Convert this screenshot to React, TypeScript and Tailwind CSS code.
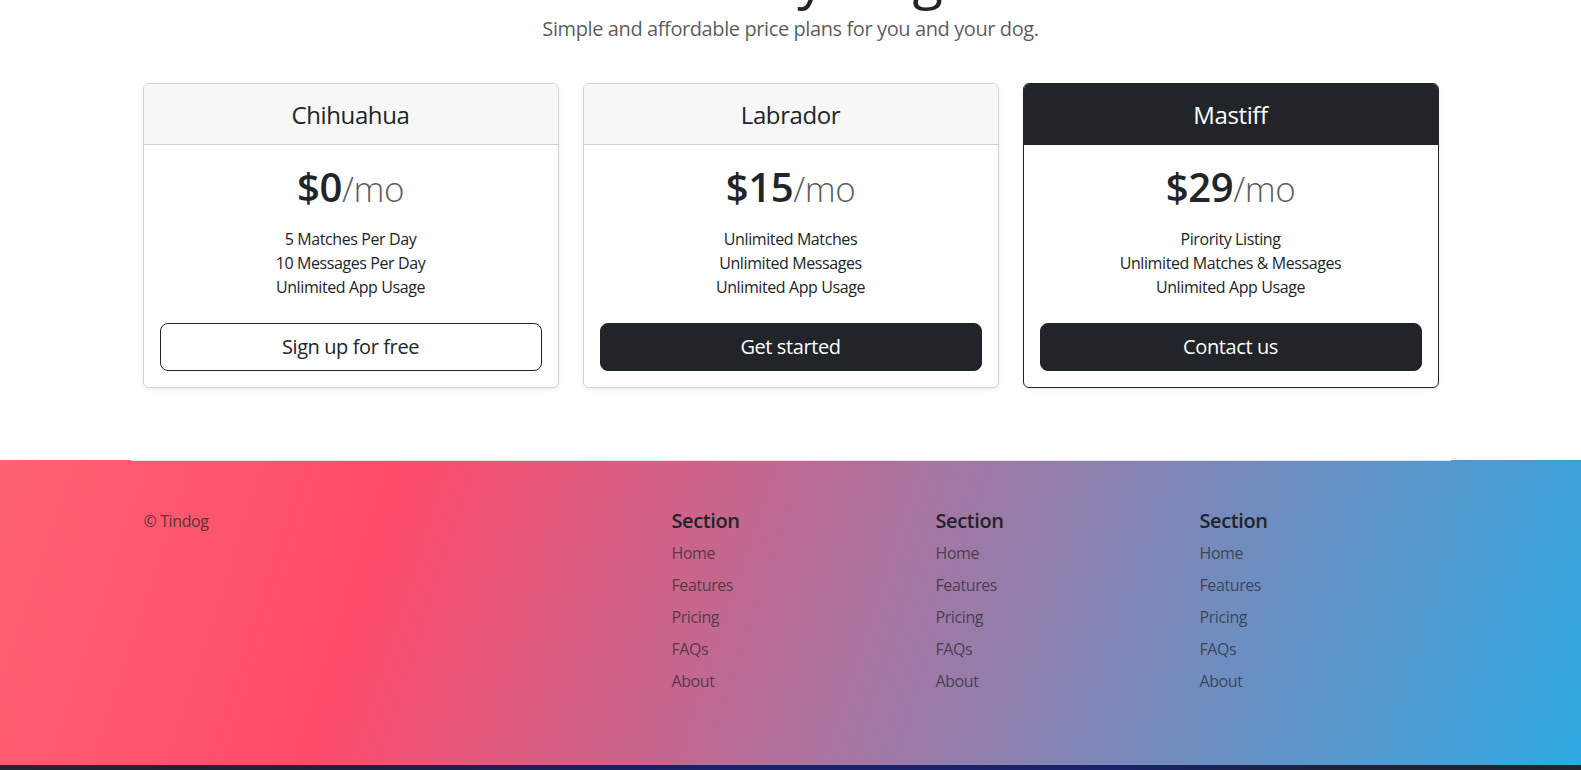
const plans = [
  {
    name: "Chihuahua",
    price: "$0",
    features: ["5 Matches Per Day", "10 Messages Per Day", "Unlimited App Usage"],
    cta: "Sign up for free",
    featured: false,
    outline: true,
  },
  {
    name: "Labrador",
    price: "$15",
    features: ["Unlimited Matches", "Unlimited Messages", "Unlimited App Usage"],
    cta: "Get started",
    featured: false,
    outline: false,
  },
  {
    name: "Mastiff",
    price: "$29",
    features: ["Pirority Listing", "Unlimited Matches & Messages", "Unlimited App Usage"],
    cta: "Contact us",
    featured: true,
    outline: false,
  },
];

const links = ["Home", "Features", "Pricing", "FAQs", "About"];

function PlanCard({ plan }: { plan: (typeof plans)[number] }) {
  return (
    <div
      className={
        "overflow-hidden rounded-md border bg-white text-center shadow-[0_2px_4px_rgba(0,0,0,0.075)] " +
        (plan.featured ? "border-[#212529]" : "border-[#d3d3d4]")
      }
    >
      <div
        className={
          "flex h-[61px] items-center justify-center border-b " +
          (plan.featured ? "border-[#212529] bg-[#212529] text-white" : "border-[#d3d3d4] bg-[#f7f7f7] text-[#212529]")
        }
      >
        <h4 className="text-[24px] font-normal leading-[29px]">{plan.name}</h4>
      </div>
      <div className="p-4">
        <h1 className="pt-[3px] text-[40px] font-semibold leading-[45px] text-[#212529]">
          {plan.price}
          <small className="text-[35px] font-light text-[#212529]/75">/mo</small>
        </h1>
        <ul className="mb-6 mt-4 text-[16px] leading-6 text-[#212529]">
          {plan.features.map((f) => (
            <li key={f}>{f}</li>
          ))}
        </ul>
        <button
          type="button"
          className={
            "h-12 w-full rounded-lg border border-[#212529] text-[20px] leading-[30px] " +
            (plan.outline ? "bg-white text-[#212529]" : "bg-[#212529] text-white")
          }
        >
          {plan.cta}
        </button>
      </div>
    </div>
  );
}

export default function App() {
  return (
    <div className="min-h-[770px] overflow-hidden bg-white font-['Open_Sans','Noto_Sans',sans-serif] tracking-tight text-[#212529]">
      {/* Pricing */}
      <section className="mx-auto w-[1320px] px-3">
        <div className="text-center">
          <h1 className="mt-[-58px] mb-[5px] text-[56px] font-normal leading-[67px]">A Plan for Every Dog's Needs</h1>
          <p className="mb-[39px] text-[20px] leading-[30px] text-[#212529]/75">
            Simple and affordable price plans for you and your dog.
          </p>
        </div>

        <div className="grid grid-cols-3 gap-6">
          {plans.map((p) => (
            <PlanCard key={p.name} plan={p} />
          ))}
        </div>
      </section>

      {/* Footer */}
      <div className="mt-[72px] bg-[linear-gradient(108deg,#fd6272_0%,#ff4b6a_24%,#a974a0_55%,#2fa9e2_100%)]">
        <footer className="mx-auto w-[1320px] border-t border-[#e4e2e6] px-3 py-12">
          <div className="grid w-[1320px] grid-cols-[528px_264px_264px_264px]">
            <div>
              <span className="mb-4 block pl-[1px] text-[16px] leading-6 text-[#212529]/75">© Tindog</span>
            </div>
            {[0, 1, 2].map((i) => (
              <div key={i} className="pl-[1px]">
                <h5 className="mb-2 text-[20px] font-semibold leading-6 text-[#212529]">Section</h5>
                <ul className="mb-6">
                  {links.map((l) => (
                    <li key={l} className="mb-2 text-[16px] leading-6">
                      <a href="#" className="text-[#212529]/70 no-underline">
                        {l}
                      </a>
                    </li>
                  ))}
                </ul>
              </div>
            ))}
          </div>
        </footer>
      </div>

      {/* taskbar edge */}
      <div className="h-[6px] bg-[linear-gradient(to_right,#22262f_0%,#1e2338_18%,#18236b_45%,#18236b_70%,#1e2338_85%,#22262f_100%)]" />
    </div>
  );
}
